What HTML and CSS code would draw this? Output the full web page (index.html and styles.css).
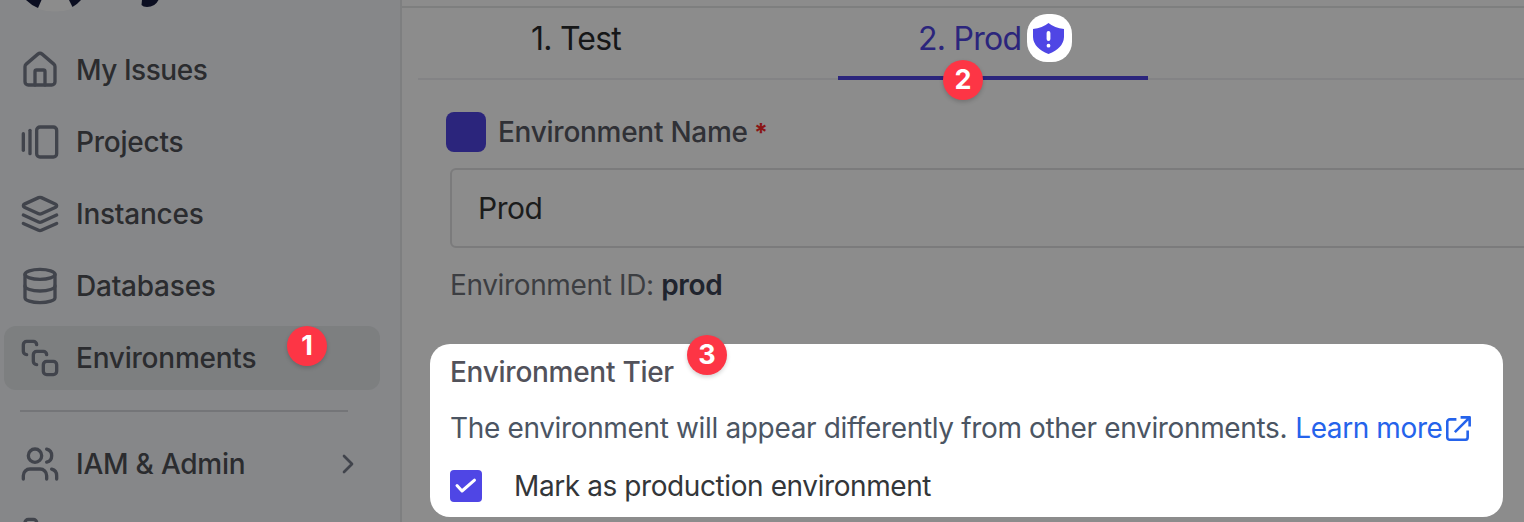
FILE: index.html
```
<!DOCTYPE html>
<html lang="en">
<head>
<meta charset="utf-8">
<title>Environments</title>
<link rel="stylesheet" href="styles.css">
</head>
<body>
<div class="app">
  <aside class="sidebar">
    <div class="brand">
      <svg class="brand-mark" viewBox="0 0 60 12"><path class="brand-light" d="M17 0H45L48 9Q31 14 14 9Z"/><path class="brand-dark" d="M2 0H17.500L14 8Q7 5 2 0Z"/><path class="brand-dark" d="M45 0H57Q53 4.500 48.500 7Z"/></svg>
      <svg class="brand-word" viewBox="0 0 20 8"><path class="brand-dark" d="M2 0H18.500Q15 7 7 7Q3 7 1.500 5Z"/></svg>
    </div>
    <nav class="nav">
      <a class="item"><svg class="icon" viewBox="0 0 24 24"><path d="M15 21v-8a1 1 0 0 0-1-1h-4a1 1 0 0 0-1 1v8"/><path d="M3 10a2 2 0 0 1 .709-1.528l7-5.999a2 2 0 0 1 2.582 0l7 5.999A2 2 0 0 1 21 10v9a2 2 0 0 1-2 2H5a2 2 0 0 1-2-2z"/></svg><span class="tight">My Issues</span></a>
      <a class="item"><svg class="icon" viewBox="0 0 24 24"><path d="M2 7v10"/><path d="M6 5v14"/><rect x="10" y="3" width="12" height="18" rx="2"/></svg><span>Projects</span></a>
      <a class="item"><svg class="icon" viewBox="0 0 24 24"><path d="m12.830 2.180a2 2 0 0 0-1.660 0L2.600 6.080a1 1 0 0 0 0 1.830l8.580 3.910a2 2 0 0 0 1.660 0l8.580-3.900a1 1 0 0 0 0-1.830Z"/><path d="m22 17.650-9.170 4.160a2 2 0 0 1-1.660 0L2 17.650"/><path d="m22 12.650-9.170 4.160a2 2 0 0 1-1.660 0L2 12.650"/></svg><span>Instances</span></a>
      <a class="item"><svg class="icon" viewBox="0 0 24 24"><ellipse cx="12" cy="5" rx="9" ry="3"/><path d="M3 5V19A9 3 0 0 0 21 19V5"/><path d="M3 12A9 3 0 0 0 21 12"/></svg><span>Databases</span></a>
      <a class="item active"><svg class="icon" viewBox="0 0 24 24"><path d="M4 10c-1.100 0-2-.9-2-2V4c0-1.100.9-2 2-2h4c1.100 0 2 .9 2 2"/><path d="M10 16c-1.100 0-2-.9-2-2v-4c0-1.100.9-2 2-2h4c1.100 0 2 .9 2 2"/><rect x="14" y="14" width="8" height="8" rx="2"/></svg><span>Environments</span><b class="badge badge-one">1</b></a>
      <hr class="divider">
      <a class="item"><svg class="icon" viewBox="0 0 24 24"><path d="M16 21v-2a4 4 0 0 0-4-4H6a4 4 0 0 0-4 4v2"/><circle cx="9" cy="7" r="4"/><path d="M22 21v-2a4 4 0 0 0-3-3.870"/><path d="M16 3.130a4 4 0 0 1 0 7.750"/></svg><span>IAM &amp; Admin</span><svg class="chevron" viewBox="0 0 24 24"><path d="m9 18 6-6-6-6"/></svg></a>
      <a class="item"><svg class="icon" viewBox="0 0 24 24"><path d="M3 10V4c0-1.100.9-2 2-2h3c1.100 0 2 .9 2 2"/></svg></a>
    </nav>
  </aside>
  <main class="main">
    <div class="topbar"></div>
    <div class="tabs">
      <div class="tab tab-test"><span>1. Test</span></div>
      <div class="tab tab-prod"><span>2. Prod</span>
        <i class="shield"><svg viewBox="0 0 31 31"><path class="shield-body" d="M15.500 0Q9.500 5 0 6V14Q0.500 25 15.500 31Q30.500 25 31 14V6Q21.500 5 15.500 0Z"/><path class="shield-mark" d="M15.500 10v6M15.500 22.700h.01"/></svg></i>
        <b class="badge badge-two">2</b>
      </div>
    </div>
    <section class="form">
      <div class="name-row"><i class="swatch"></i><label class="name-label">Environment Name <em>*</em></label></div>
      <div class="input">Prod</div>
      <p class="env-id">Environment ID: <strong>prod</strong></p>
    </section>
    <section class="tier">
      <h2 class="tier-title">Environment Tier</h2>
      <p class="desc"><span>The environment will appear differently from other environments.</span><a class="learn">Learn more</a><svg class="external" viewBox="0 0 24 24"><path d="M10 3.200H3.700A2.500 2.500 0 0 0 1.200 5.700V20.300A2.500 2.500 0 0 0 3.700 22.800H18.300A2.500 2.500 0 0 0 20.800 20.300V14M14 1.300H22.700V10M22.500 1.500 8.500 15.500"/></svg></p>
      <label class="check"><i class="box"><svg viewBox="0 0 32 32"><path d="M7 15.500l5 5.500L24.500 10.200"/></svg></i><span>Mark as production environment</span></label>
      <b class="badge badge-three">3</b>
    </section>
  </main>
</div>
</body>
</html>
```
FILE: styles.css
```
* { box-sizing: border-box; }
body { margin: 0; overflow: hidden; font-family: Inter, "Liberation Sans", sans-serif; }
.app { display: flex; width: 1524px; height: 522px; overflow: hidden; background: #8c8c8c; }
.sidebar { flex: none; width: 402px; border-right: 2px solid #7e7f80; background: #868789; }
.brand { display: flex; align-items: flex-start; height: 38px; padding-left: 24px; }
.brand-mark { width: 60px; height: 12px; }
.brand-word { width: 20px; height: 8px; margin-left: 56px; }
.brand-dark { fill: #0b0e21; }
.brand-light { fill: #8c8c8c; }
.nav { display: flex; flex-direction: column; gap: 8px; padding-left: 4px; }
.item { position: relative; display: flex; flex: none; align-items: center; gap: 16px; width: 376px; height: 64px; padding: 0 16px; border-radius: 12px; color: #2b2c2f; font-size: 28px; font-weight: 500; letter-spacing: -.23px; white-space: nowrap; }
.item.active { background: #7d7f80; }
.tight { letter-spacing: -.47px; }
.icon, .chevron { flex: none; fill: none; stroke: #41444c; stroke-width: 2; stroke-linecap: round; stroke-linejoin: round; }
.icon { width: 40px; height: 40px; }
.chevron { width: 32px; height: 32px; margin-left: auto; }
.divider { width: 328px; height: 2px; margin: 12px 0 12px 16px; border: 0; background: #747578; }
.badge { position: absolute; display: flex; align-items: center; justify-content: center; width: 40px; height: 40px; padding-bottom: 2px; border-radius: 50%; background: #fd3545; color: #fff; font-size: 27px; font-weight: 700; letter-spacing: 0; line-height: 1; box-shadow: 0 2px 4px rgba(0, 0, 0, .18); }
.badge-one { left: 283px; top: 0; }
.main { flex: 1; min-width: 0; }
.topbar { height: 8px; border-bottom: 2px solid #7e7f7f; }
.tabs { display: flex; gap: 110px; height: 72px; margin-left: 16px; border-bottom: 2px solid #838385; }
.tab { position: relative; display: flex; flex: none; justify-content: center; width: 310px; height: 72px; padding-top: 11px; border-bottom: 4px solid transparent; font-size: 32px; letter-spacing: -.75px; line-height: 40px; }
.tab-test { color: #161718; padding-left: 6px; }
.tab-prod { justify-content: flex-start; padding-left: 80px; border-color: #2b257c; color: #2b257c; }
.shield { position: absolute; left: 189px; top: 6px; display: flex; align-items: center; justify-content: center; width: 45px; height: 48px; border-radius: 20px; background: #fff; }
.shield svg { width: 31px; height: 31px; margin-right: 2px; }
.shield-body { fill: #4f46e5; }
.shield-mark { fill: none; stroke: #fff; stroke-width: 3.800; stroke-linecap: round; }
.badge-two { left: 105px; top: 52px; }
.form { height: 264px; padding: 32px 0 0 48px; }
.name-row { display: flex; align-items: center; gap: 12px; height: 40px; margin-left: -4px; }
.swatch { width: 40px; height: 40px; border-radius: 8px; background: #2b257c; }
.name-label { color: #303136; font-size: 28px; font-weight: 500; letter-spacing: -.27px; white-space: nowrap; }
.name-label em { margin-left: -1px; color: #8a1515; font-size: 25px; font-style: normal; font-weight: 700; }
.input { display: flex; align-items: center; width: 1120px; height: 80px; margin-top: 16px; padding-left: 26px; border: 2px solid #7b7b7c; border-radius: 6px; color: #1b1c1c; font-size: 30px; letter-spacing: -.5px; }
.env-id { margin: 20px 0 0; color: #3c3e42; font-size: 28px; letter-spacing: -.36px; line-height: 34px; }
.env-id strong { color: #20242e; font-weight: 600; }
.tier { position: relative; width: 1073px; height: 173px; margin-left: 28px; padding: 8px 0 0 20px; border-radius: 20px; background: #fff; color: #52525b; font-size: 28px; }
.tier-title { margin: 0; font-size: 28px; font-weight: 500; letter-spacing: -.27px; line-height: 40px; }
.desc { display: flex; align-items: center; height: 40px; margin: 16px 0 0; color: #4b5563; letter-spacing: -.35px; white-space: nowrap; }
.learn { margin-left: 8px; color: #2563eb; letter-spacing: -.4px; }
.external { width: 25px; height: 25px; margin-left: 3px; fill: none; stroke: #2563eb; stroke-width: 2.500; stroke-linejoin: round; }
.check { display: flex; align-items: center; gap: 32px; height: 32px; margin-top: 22px; color: #333639; letter-spacing: -.41px; white-space: nowrap; }
.box { width: 32px; height: 32px; border-radius: 4px; background: #4f46e5; }
.box svg { display: block; width: 32px; height: 32px; fill: none; stroke: #fff; stroke-width: 3; stroke-linecap: round; stroke-linejoin: round; }
.badge-three { left: 257px; top: -9px; }
```
